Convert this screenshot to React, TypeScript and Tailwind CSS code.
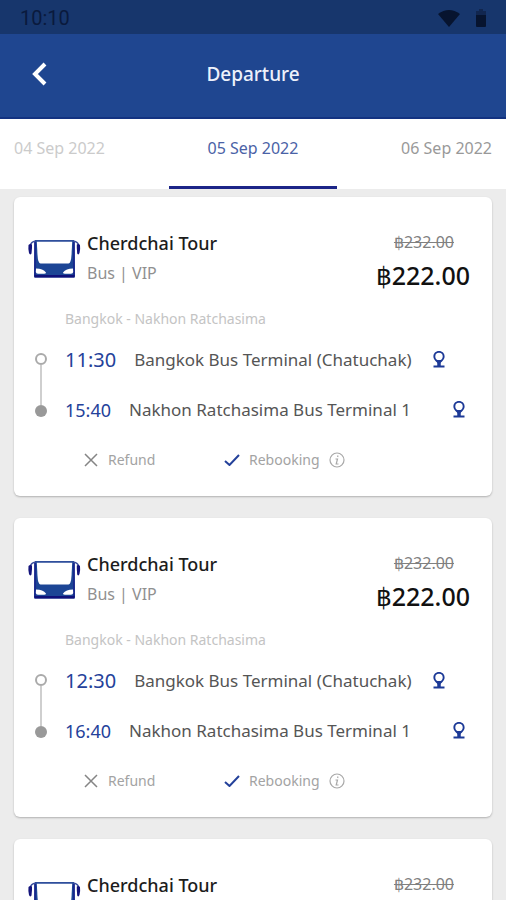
import clsx from "clsx";

interface Trip {
  id: number;
  company: string;
  type: string;
  oldPrice: string;
  price: string;
  route: string;
  departTime: string;
  departStop: string;
  arriveTime: string;
  arriveStop: string;
}

const base = {
  company: "Cherdchai Tour",
  type: "Bus | VIP",
  oldPrice: "฿232.00",
  price: "฿222.00",
  route: "Bangkok - Nakhon Ratchasima",
  departStop: "Bangkok Bus Terminal (Chatuchak)",
  arriveStop: "Nakhon Ratchasima Bus Terminal 1",
};

const trips: Trip[] = [
  { id: 1, ...base, departTime: "11:30", arriveTime: "15:40" },
  { id: 2, ...base, departTime: "12:30", arriveTime: "16:40" },
  { id: 3, ...base, departTime: "13:30", arriveTime: "17:40" },
];

const dates = [
  { label: "04 Sep 2022", className: "text-left text-[#cbcbcb]" },
  { label: "05 Sep 2022", className: "text-center text-[#4a62a6]" },
  { label: "06 Sep 2022", className: "text-right text-[#999999]" },
];

const BusIcon = () => (
  <svg viewBox="0 0 54 40" className="h-10 w-[54px] shrink-0" aria-hidden="true">
    <path d="M7.500 3H47.500L48 38.500Q48 39.500 47 39.500H8Q7 39.500 7 38.500Z" fill="#1c4595" />
    <path d="M9.800 3.500H45.200L44.500 17Q44 25.500 41.500 25.500H13.500Q11 25.500 10.500 17Z" fill="#fff" />
    <path d="M8 2.800H47" stroke="#2f4f9c" strokeWidth="1.500" />
    <path d="M8.500 3Q4 4 3.500 7M46.500 3Q51 4 51.500 7" fill="none" stroke="#3b4f9e" strokeWidth="1.500" />
    <path d="M1.500 7Q3 5.500 5 6.500V10L4.500 15.500Q3 17.500 2 15Q1 11 1.500 7ZM53 7Q51.500 5.500 49.800 6.500V10L50.200 15.500Q51.500 17.500 52.500 15Q53.500 11 53 7Z" fill="#14147c" />
    <path d="M8 4V38M47 4V38" stroke="#16208a" strokeWidth="1.500" />
    <path d="M9 30.500Q16 30.500 19 34.500Q19 35.800 17 35.800H11Q9 35.800 8.800 34ZM46 30.500Q39 30.500 36 34.500Q36 35.800 38 35.800H44Q46 35.800 46.200 34Z" fill="#fff" />
    <path d="M7.500 37H47.500V39.500H7.500Z" fill="#10107a" />
  </svg>
);

const PinIcon = () => (
  <svg viewBox="0 0 14 18" className="h-[18px] w-[14px]" aria-hidden="true">
    <path
      d="M7 0C3.700 0 1.400 2.400 1.400 5.600C1.400 9.200 4.600 10.500 7 14C9.400 10.500 12.600 9.200 12.600 5.600C12.600 2.400 10.300 0 7 0Z"
      fill="#1d3a97"
    />
    <circle cx="7" cy="5.400" r="3.700" fill="#fff" />
    <path d="M7 10V15" stroke="#1d3a97" strokeWidth="3.500" />
    <path d="M1.500 15.500H12.500" stroke="#1d3a97" strokeWidth="2" />
  </svg>
);

const StatusBar = () => (
  <div className="flex h-[34px] items-center justify-between bg-[#17366c] pt-[2px] pl-5 pr-[20px] text-[#0a1a3d]">
    <span className="font-[Roboto] text-[20px] leading-6">10:10</span>
    <div className="flex items-center gap-4">
      <svg viewBox="0 0 22 17" className="h-[17px] w-[22px]" aria-hidden="true">
        <path d="M0 4Q11 -4 22 4L11 17Z" fill="#07142f" />
      </svg>
      <svg viewBox="0 0 10 18" className="h-[18px] w-[10px]" aria-hidden="true">
        <path d="M3 0H7V2H10V7H0V2H3Z" fill="#11264f" />
        <path d="M0 6H10V17Q10 18 9 18H1Q0 18 0 17Z" fill="#07142f" />
      </svg>
    </div>
  </div>
);

const TripCard = ({ trip }: { trip: Trip }) => {
  return (
    <article className="rounded-md bg-white pt-8 pb-6 shadow-[0_1px_2px_rgba(0,0,0,0.25)]">
      <div className="flex h-20 items-start pl-[13px] pr-[22px]">
        <div className="pt-[9px]">
          <BusIcon />
        </div>
        <div className="flex-1 pl-[6px]">
          <h2 className="text-[18px] leading-7 font-medium text-[#1c1c1c]">{trip.company}</h2>
          <p className="pt-1 text-[16px] leading-6 text-[#909090]">{trip.type}</p>
        </div>
        <div className="flex flex-col items-end">
          <s className="pt-px pr-4 text-[16px] leading-6 text-[#808080]">{trip.oldPrice}</s>
          <strong className="pt-[3px] text-[25px] leading-9 font-medium text-[#111111]">
            {trip.price}
          </strong>
        </div>
      </div>
      <p className="pl-[51px] text-[14px] leading-5 text-[#c4c4c4]">{trip.route}</p>
      <div className="flex pt-[6px] pl-[21px]">
        <div className="flex w-3 flex-col items-center py-[18px]">
          <span className="size-3 rounded-full border-2 border-[#aaaaaa]" />
          <span className="w-[2px] flex-1 bg-[#cfcfcf]" />
          <span className="size-3 rounded-full bg-[#999999]" />
        </div>
        <ul className="flex-1 pl-[18px]">
          <li className="flex h-[50px] items-center">
            <time className="text-[20px] text-[#24419a]">{trip.departTime}</time>
            <span className="pl-[18px] text-[17px] text-[#555555]">{trip.departStop}</span>
            <button type="button" aria-label="Show departure stop" className="ml-5">
              <PinIcon />
            </button>
          </li>
          <li className="flex h-[50px] items-center">
            <time className="text-[18px] text-[#24419a]">{trip.arriveTime}</time>
            <span className="pl-[18px] text-[17px] text-[#555555]">{trip.arriveStop}</span>
            <button type="button" aria-label="Show arrival stop" className="ml-[41px]">
              <PinIcon />
            </button>
          </li>
        </ul>
      </div>
      <div className="flex items-center pt-[13px] pl-[70px] text-[14px] leading-6 text-[#a3a3a3]">
        <div className="flex w-[140px] items-center gap-[10px]">
          <svg viewBox="0 0 14 14" className="size-[14px]" aria-hidden="true">
            <path d="M1 1L13 13M13 1L1 13" stroke="#858585" strokeWidth="1.500" />
          </svg>
          <span>Refund</span>
        </div>
        <div className="flex items-center gap-[9px]">
          <svg viewBox="0 0 16 12" className="h-3 w-4" aria-hidden="true">
            <path d="M1 7L5.500 11L15 1" fill="none" stroke="#24419a" strokeWidth="2" />
          </svg>
          <span>Rebooking</span>
          <button type="button" aria-label="Rebooking info">
            <svg viewBox="0 0 16 16" className="size-4" fill="none" stroke="#a8a8a8" aria-hidden="true">
              <circle cx="8" cy="8" r="7" strokeWidth="1.200" />
              <path d="M9 3.500L8.600 5M6.500 7H8.500L7.200 12H9.500" strokeWidth="1.200" />
            </svg>
          </button>
        </div>
      </div>
    </article>
  );
};

export default function App() {
  return (
    <div className="flex h-screen flex-col overflow-hidden bg-[#ececec] font-['Noto_Sans',sans-serif]">
      <StatusBar />
      <header className="grid h-[85px] grid-cols-[1fr_auto_1fr] items-center border-b-2 border-[#133381] bg-[#1f4690] pb-1">
        <button type="button" aria-label="Back" className="ml-8 w-4">
          <svg viewBox="0 0 16 24" className="h-6 w-4" aria-hidden="true">
            <path d="M13 2L3 12L13 22" fill="none" stroke="#fff" strokeWidth="4" />
          </svg>
        </button>
        <h1 className="text-[19px] leading-7 font-medium text-[#edf1fb]">Departure</h1>
      </header>
      <nav className="grid h-[70px] shrink-0 grid-cols-3 bg-white">
        {dates.map((date, i) => (
          <button
            key={date.label}
            type="button"
            className={clsx(
              "border-b-3 px-[14px] pb-[10px] text-[16px]",
              i === 1 ? "border-[#1c2588]" : "border-transparent",
              date.className
            )}
          >
            {date.label}
          </button>
        ))}
      </nav>
      <main className="flex min-h-0 flex-1 flex-col gap-[22px] overflow-y-auto px-[14px] pt-2 [scrollbar-width:none]">
        {trips.map((trip) => (
          <div key={trip.id}>
            <TripCard trip={trip} />
          </div>
        ))}
      </main>
    </div>
  );
}
